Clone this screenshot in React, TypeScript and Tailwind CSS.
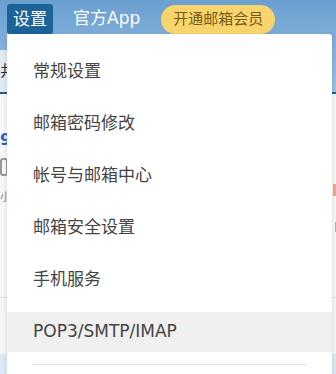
import React from 'react';

const items = ['常规设置', '邮箱密码修改', '帐号与邮箱中心', '邮箱安全设置', '手机服务', 'POP3/SMTP/IMAP'];

const font = { fontFamily: '"DejaVu Sans", "Noto Sans CJK SC", sans-serif' };

export default function App() {
  return (
    <div className="relative w-[336px] h-[374px] overflow-hidden bg-white" style={font}>
      {/* Header */}
      <div className="h-[92px] bg-gradient-to-b from-[#6b9fd0] to-[#9cc2e6] flex flex-col">
        <div className="flex items-center h-[37px] pl-[7px] pt-[1px]">
          <span className="bg-[#1b6399] text-white text-[17px] leading-[30px] px-[6px] rounded-[3px]">设置</span>
          <span className="text-white text-[17px] ml-[20px]">官方App</span>
          <span className="bg-[#f8d56c] text-[#7a5818] text-[15px] leading-[29px] px-[12px] rounded-full ml-[21px]">开通邮箱会员</span>
        </div>
        <div className="mt-[13px] w-[10px] h-[42px] bg-[#dfe9f2] text-[15px] text-[#333] leading-[42px] overflow-hidden">井</div>
      </div>
      <div className="h-[2px] bg-[#1f5f96]" />
      {/* Page behind */}
      <div className="bg-[#f7f7f7] h-[203px] flex justify-between pt-[36px]">
        <div className="flex flex-col gap-[8px] w-[10px] overflow-hidden">
          <span className="text-[16px] font-bold text-[#2266cc] leading-[20px]">9.</span>
          <span className="w-[8px] h-[18px] border-2 border-[#999] rounded-[3px]" />
          <span className="text-[11px] text-[#88a] mt-[6px]">小</span>
        </div>
        <div className="flex flex-col gap-[26px] pt-[54px] items-end">
          <span className="w-[3px] h-[12px] bg-[#f4a48c]" />
          <span className="w-[1px] h-[10px] bg-[#b9a0f0]" />
        </div>
      </div>
      <div className="h-px bg-[#e0e0e0]" />
      <div className="bg-[#f5f5f5] h-[56px]" />
      <div className="bg-[#dde9f7] h-[30px]" />

      {/* Dropdown menu */}
      <div className="absolute left-[7px] top-[34px] w-[325px] h-[360px] bg-white rounded-tr-[3px] shadow-[0_1px_4px_rgba(0,0,0,0.15)]">
        <div className="pt-[18px] flex flex-col gap-[12px]">
          {items.map((t, i) => (
            <div
              key={t}
              className={`h-[40px] flex items-center pl-[26px] text-[17px] text-[#444] ${i === items.length - 1 ? 'bg-[#f0f0f0]' : ''}`}
            >
              {t}
            </div>
          ))}
        </div>
        <div className="mx-[25px] mt-[12px] h-px bg-[#e2e2e2]" />
      </div>
    </div>
  );
}
